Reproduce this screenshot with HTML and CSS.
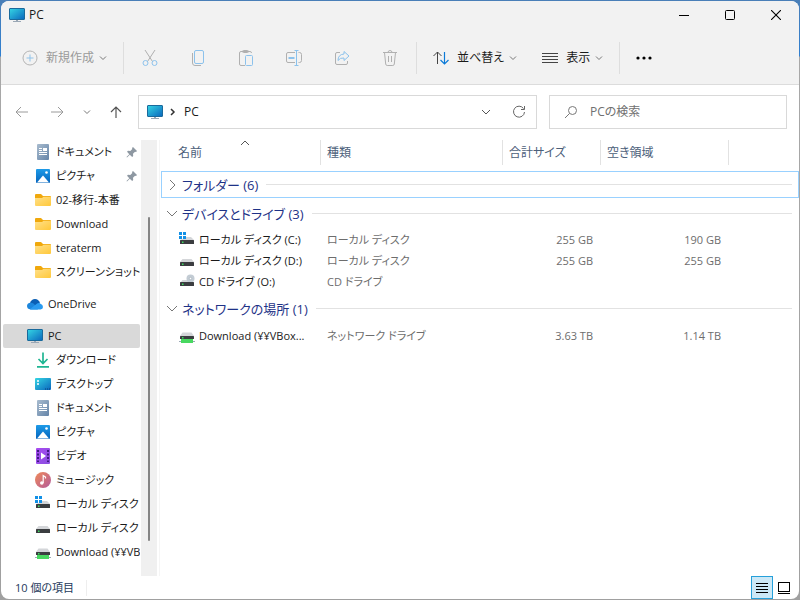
FILE: index.html
```html
<!DOCTYPE html>
<html lang="ja">
<head>
<meta charset="utf-8">
<title>PC</title>
<link rel="stylesheet" href="styles.css">
</head>
<body>

<!-- icon sprite -->
<svg class="sprite" aria-hidden="true">
  <defs>
    <linearGradient id="g-screen" x1="0" y1="0" x2="1" y2="1"><stop offset="0" stop-color="#35d6e4"/><stop offset="1" stop-color="#0a66bd"/></linearGradient>
    <linearGradient id="g-folder" x1="0" y1="0" x2="1" y2="1"><stop offset="0" stop-color="#ffe08a"/><stop offset="1" stop-color="#ffc83a"/></linearGradient>
    <linearGradient id="g-doc" x1="0" y1="0" x2="1" y2="1"><stop offset="0" stop-color="#a9bccf"/><stop offset="1" stop-color="#6484a8"/></linearGradient>
    <linearGradient id="g-pic" x1="0" y1="0" x2="0" y2="1"><stop offset="0" stop-color="#1e9be8"/><stop offset="1" stop-color="#0464bd"/></linearGradient>
    <linearGradient id="g-video" x1="0" y1="0" x2="1" y2="1"><stop offset="0" stop-color="#a84bf0"/><stop offset="1" stop-color="#8a4fe0"/></linearGradient>
    <linearGradient id="g-music" x1="0" y1="0" x2="1" y2="1"><stop offset="0" stop-color="#f08a58"/><stop offset="1" stop-color="#b35a9c"/></linearGradient>
  </defs>
  <symbol id="i-pc" viewBox="0 0 16 16">
    <rect x="0.500" y="1.500" width="15" height="11" rx="0.500" fill="url(#g-screen)" stroke="#1a6a9c"/>
    <path d="M7 13h2v1h3v1H4v-1h3z" fill="#9aa7b5"/>
  </symbol>
  <symbol id="i-folder" viewBox="0 0 16 16">
    <path d="M0 3q0-1 1-1h5l2 2h7q1 0 1 1v3H0z" fill="#f0a80c"/>
    <path d="M0 6h7l1.500-1.200H15q1 0 1 1V13q0 1-1 1H1q-1 0-1-1z" fill="url(#g-folder)"/>
  </symbol>
  <symbol id="i-doc" viewBox="0 0 16 16">
    <rect x="2" y="0" width="12" height="16" rx="1" fill="url(#g-doc)"/>
    <path d="M4 4.500h3M4 6.500h3M4 8.500h8M4 10.500h8" stroke="#fff"/><rect x="8" y="4" width="4" height="3" fill="#fff"/>
  </symbol>
  <symbol id="i-pic" viewBox="0 0 16 16">
    <rect x="1" y="1" width="14" height="14" rx="1" fill="url(#g-pic)"/>
    <path d="M2 14.500L8 7.500l6 7z" fill="#fff"/><circle cx="11.500" cy="4.500" r="1.300" fill="#fff"/>
  </symbol>
  <symbol id="i-video" viewBox="0 0 16 16">
    <rect x="1" y="0" width="14" height="16" rx="1" fill="url(#g-video)"/>
    <path d="M3 2v12M13 2v12" stroke="#3e1a80" stroke-width="2" stroke-dasharray="2 1.500"/>
    <path d="M6 4.500l5 3.500-5 3.500z" fill="#fff"/>
  </symbol>
  <symbol id="i-music" viewBox="0 0 16 16">
    <circle cx="8" cy="8" r="8" fill="url(#g-music)"/>
    <circle cx="6.800" cy="11" r="1.800" fill="#fff"/><path d="M8.200 11V3.500l2.300 1.500v1.500" fill="none" stroke="#fff" stroke-width="1.200"/>
  </symbol>
  <symbol id="i-down" viewBox="0 0 16 16">
    <path d="M8 0.500v11M3.500 7L8 11.500 12.500 7M2 14.800h12" fill="none" stroke="#1fb592" stroke-width="1.700"/>
  </symbol>
  <symbol id="i-desk" viewBox="0 0 16 16">
    <rect x="0" y="2" width="16" height="12" rx="1" fill="url(#g-screen)"/>
    <path d="M2 5h2M2 8h2" stroke="#fff" stroke-width="1.500"/><path d="M10 13h5" stroke="#083e78" stroke-dasharray="1 1"/>
  </symbol>
  <symbol id="i-cloud" viewBox="0 0 16 16">
    <path d="M3 7Q4.500 3 8 3t5 4l-3 3H4z" fill="#0b5fb4"/>
    <path d="M3.500 13.500Q0 13 0 10t3.500-3.300Q6 6.500 8 9l3 4.500z" fill="#1c86dc"/>
    <path d="M3 13L9.500 8q2-1.600 4-0.300 2.500 1 2.500 3.300t-2.500 2.500h-10z" fill="#2a9bf0"/>
  </symbol>
  <symbol id="i-disk" viewBox="0 0 16 16">
    <path d="M3.500 6h9L15 9H1z" fill="#d4d6d9"/><rect x="1" y="9" width="14" height="4" rx="0.500" fill="#3b3d40"/><rect x="3" y="10.500" width="1.500" height="1.500" fill="#3ddc60"/>
  </symbol>
  <symbol id="i-cdisk" viewBox="0 0 16 16">
    <path d="M7 5h5l3 3H1z" fill="#d4d6d9"/><rect x="1" y="8" width="14" height="4" rx="0.500" fill="#3b3d40"/><rect x="3" y="9.500" width="1.500" height="1.500" fill="#3ddc60"/>
    <path d="M0 0h3v3H0zM4 0h3v3H4zM0 4h3v3H0zM4 4h3v3H4z" fill="#1190e6"/>
  </symbol>
  <symbol id="i-cd" viewBox="0 0 16 16">
    <path d="M3.500 6h9L15 9H1z" fill="#d4d6d9"/><circle cx="11.500" cy="4.500" r="4" fill="#c3ccd4"/><circle cx="11.500" cy="4.500" r="1.200" fill="#fff" stroke="#8b98a4" stroke-width="0.500"/>
    <rect x="1" y="8" width="14" height="4" rx="0.500" fill="#3b3d40"/><rect x="3" y="9.500" width="1.500" height="1.500" fill="#3ddc60"/>
  </symbol>
  <symbol id="i-net" viewBox="0 0 16 16">
    <path d="M3.500 4.500h9L15 8H1z" fill="#d4d6d9"/><rect x="1" y="8" width="14" height="3" rx="0.500" fill="#3b3d40"/><rect x="3" y="9" width="1.500" height="1.500" fill="#3ddc60"/>
    <rect x="2" y="11" width="12" height="4" fill="#48d860"/><path d="M0 13.500h2M14 13.500h2" stroke="#9aa7b5"/>
  </symbol>
  <symbol id="i-pin" viewBox="0 0 12 12">
    <path d="M7 1l4 4-1 1-1-0.300-2 2 0.200 2.300-1 1L3.800 8.700 1 11.500 0.500 11l2.800-2.800L1 5.800l1-1 2.300 0.200 2-2L6 2z" fill="#8e98a2"/>
  </symbol>
  <symbol id="i-chev" viewBox="0 0 10 10"><path d="M2 3.500l3 3 3-3" fill="none" stroke="currentColor"/></symbol>
</svg>

<div class="window">

  <header class="titlebar">
    <svg class="icon"><use href="#i-pc"/></svg>
    <h1>PC</h1>
    <div class="controls">
      <button aria-label="最小化"><svg width="10" height="10"><path d="M0 5.500h10" stroke="#000"/></svg></button>
      <button aria-label="最大化"><svg width="10" height="10"><rect x="0.500" y="0.500" width="9" height="9" rx="1" fill="none" stroke="#000"/></svg></button>
      <button aria-label="閉じる"><svg width="10" height="10"><path d="M0 0l10 10M10 0L0 10" stroke="#000" stroke-width="1.100"/></svg></button>
    </div>
  </header>

  <div class="toolbar">
    <button class="new" disabled>
      <svg width="16" height="16" fill="none"><circle cx="8" cy="8" r="7" stroke="#b4b4b4"/><path d="M8 4.500v7M4.500 8h7" stroke="#90c3ea"/></svg>
      <span>新規作成</span>
      <svg class="chev"><use href="#i-chev"/></svg>
    </button>
    <div class="tools">
      <button disabled aria-label="切り取り"><svg width="16" height="18" fill="none"><path d="M3 1l7.500 11.500M13 1L5.500 12.500" stroke="#b0b0b0"/><circle cx="3.500" cy="14" r="2.500" stroke="#8cc2ec"/><circle cx="12.500" cy="14" r="2.500" stroke="#8cc2ec"/></svg></button>
      <button disabled aria-label="コピー"><svg width="16" height="18" fill="none"><path d="M2.500 4v10q0 2.500 2.500 2.500h6" stroke="#b0b0b0"/><rect x="4.500" y="1.500" width="9" height="13" rx="1.500" stroke="#8cc2ec"/></svg></button>
      <button disabled aria-label="貼り付け"><svg width="16" height="18" fill="none"><path d="M7 16.500H3q-1.500 0-1.500-1.500V4q0-1.500 1.500-1.500h9q1.500 0 1.500 1.500" stroke="#b0b0b0"/><rect x="4.500" y="1.500" width="6" height="2" rx="1" stroke="#b0b0b0"/><rect x="7.500" y="6.500" width="7" height="10" rx="1" stroke="#8cc2ec"/></svg></button>
      <button disabled aria-label="名前の変更"><svg width="16" height="18" fill="none"><path d="M9 3.500H2Q0.500 3.500 0.500 5v7q0 1.500 1.500 1.500h7M12.500 3.500h1q2 0 2 2v6q0 2-2 2h-1" stroke="#b0b0b0"/><path d="M10.500 1.500v15M8.500 1.500h4M8.500 16.500h4" stroke="#8cc2ec"/><path d="M2.500 9h6" stroke="#8cc2ec" stroke-width="2"/></svg></button>
      <button disabled aria-label="共有"><svg width="16" height="18" fill="none"><path d="M6 3.500H3Q1.500 3.500 1.500 5v9q0 1.500 1.500 1.500h9q1.500 0 1.500-1.500v-2" stroke="#b0b0b0"/><path d="M10 2.500l5 4.500-5 4.500V9Q6 8.500 4 11.500 4 5.500 10 5z" stroke="#8cc2ec"/></svg></button>
      <button disabled aria-label="削除"><svg width="16" height="18" fill="none" stroke="#b0b0b0"><path d="M1 3.500h14M2.500 3.500l1.200 11.500q0.200 1.500 1.500 1.500h5.600q1.300 0 1.500-1.500L13.500 3.500M6 3.500q0-2 2-2t2 2M6.500 7v6M9.500 7v6"/></svg></button>
    </div>
    <div class="menus">
      <button>
        <svg width="16" height="16" fill="none"><path d="M4.500 14V2M0.500 6l4-4 4 4" stroke="#444"/><path d="M11.500 2v12M7.500 10l4 4 4-4" stroke="#0b7ad8" stroke-width="1.200"/></svg>
        <span>並べ替え</span>
        <svg class="chev"><use href="#i-chev"/></svg>
      </button>
      <button>
        <svg width="16" height="16"><path d="M0 3.500h16M0 6.500h16M0 9.500h16M0 12.500h16" stroke="#444"/></svg>
        <span>表示</span>
        <svg class="chev"><use href="#i-chev"/></svg>
      </button>
    </div>
    <button class="more" aria-label="もっと見る"><svg width="16" height="16"><circle cx="2" cy="8" r="1.600"/><circle cx="8" cy="8" r="1.600"/><circle cx="14" cy="8" r="1.600"/></svg></button>
  </div>

  <div class="navbar">
    <div class="history">
      <button aria-label="戻る"><svg width="14" height="12" fill="none" stroke="#9a9a9a"><path d="M13 6H1M6 1L1 6l5 5"/></svg></button>
      <button aria-label="進む"><svg width="14" height="12" fill="none" stroke="#9a9a9a"><path d="M1 6h12M8 1l5 5-5 5"/></svg></button>
      <button class="recent" aria-label="最近の場所"><svg class="chev"><use href="#i-chev"/></svg></button>
      <button aria-label="上へ"><svg width="12" height="14" fill="none" stroke="#555" stroke-width="1.200"><path d="M6 13V2M1 7l5-5 5 5"/></svg></button>
    </div>
    <div class="address">
      <svg class="icon"><use href="#i-pc"/></svg>
      <svg class="sep" width="6" height="8" fill="none"><path d="M1 1l3 3-3 3" stroke="#333" stroke-width="1.500"/></svg>
      <a href="#">PC</a>
      <button aria-label="以前の場所"><svg width="10" height="10" fill="none"><path d="M1 3l4 4 4-4" stroke="#555"/></svg></button>
      <button aria-label="更新"><svg width="14" height="14" fill="none" stroke="#666"><path d="M11.500 3.500A5.500 5.500 0 1 0 12.500 7M12.500 1v3.500H9"/></svg></button>
    </div>
    <label class="search">
      <svg width="14" height="14" fill="none" stroke="#777"><circle cx="8.500" cy="5.500" r="4"/><path d="M5.500 8.500L1 13"/></svg>
      <input type="search" placeholder="PCの検索" aria-label="PCの検索">
    </label>
  </div>

  <div class="content">
    <nav class="tree">
      <ul class="sub">
        <li><a href="#"><svg class="icon"><use href="#i-doc"/></svg><span>ドキュメント</span><svg class="pin"><use href="#i-pin"/></svg></a></li>
        <li><a href="#"><svg class="icon"><use href="#i-pic"/></svg><span>ピクチャ</span><svg class="pin"><use href="#i-pin"/></svg></a></li>
        <li><a href="#"><svg class="icon"><use href="#i-folder"/></svg><span>02-移行-本番</span></a></li>
        <li><a href="#"><svg class="icon"><use href="#i-folder"/></svg><span>Download</span></a></li>
        <li><a href="#"><svg class="icon"><use href="#i-folder"/></svg><span>teraterm</span></a></li>
        <li><a href="#"><svg class="icon"><use href="#i-folder"/></svg><span>スクリーンショット</span></a></li>
      </ul>
      <ul>
        <li><a href="#"><svg class="icon"><use href="#i-cloud"/></svg><span>OneDrive</span></a></li>
      </ul>
      <ul>
        <li><a class="current" href="#"><svg class="icon"><use href="#i-pc"/></svg><span>PC</span></a>
          <ul class="sub">
            <li><a href="#"><svg class="icon"><use href="#i-down"/></svg><span>ダウンロード</span></a></li>
            <li><a href="#"><svg class="icon"><use href="#i-desk"/></svg><span>デスクトップ</span></a></li>
            <li><a href="#"><svg class="icon"><use href="#i-doc"/></svg><span>ドキュメント</span></a></li>
            <li><a href="#"><svg class="icon"><use href="#i-pic"/></svg><span>ピクチャ</span></a></li>
            <li><a href="#"><svg class="icon"><use href="#i-video"/></svg><span>ビデオ</span></a></li>
            <li><a href="#"><svg class="icon"><use href="#i-music"/></svg><span>ミュージック</span></a></li>
            <li><a href="#"><svg class="icon"><use href="#i-cdisk"/></svg><span>ローカル ディスク (C:)</span></a></li>
            <li><a href="#"><svg class="icon"><use href="#i-disk"/></svg><span>ローカル ディスク (D:)</span></a></li>
            <li><a href="#"><svg class="icon"><use href="#i-net"/></svg><span>Download (¥¥VBox...</span></a></li>
          </ul>
        </li>
      </ul>
    </nav>
    <div class="scrollbar"><div class="thumb"></div></div>

    <main>
      <table>
        <colgroup><col class="c-name"><col class="c-type"><col class="c-size"><col class="c-free"><col></colgroup>
        <thead>
          <tr>
            <th class="sorted">名前<svg width="10" height="6" fill="none"><path d="M1 5l4-4 4 4" stroke="#555"/></svg></th>
            <th>種類</th><th>合計サイズ</th><th>空き領域</th><td></td>
          </tr>
        </thead>
        <tbody>
          <tr class="group"><th colspan="5"><button class="focused"><svg width="12" height="12" fill="none"><path d="M4 1l5 5-5 5" stroke="#777"/></svg><span>フォルダー (6)</span></button></th></tr>
        </tbody>
        <tbody>
          <tr class="group"><th colspan="5"><button><svg width="12" height="12" fill="none"><path d="M1 3l5 5 5-5" stroke="#777"/></svg><span>デバイスとドライブ (3)</span></button></th></tr>
          <tr><td><div class="name"><svg class="icon"><use href="#i-cdisk"/></svg><span>ローカル ディスク (C:)</span></div></td><td>ローカル ディスク</td><td>255 GB</td><td>190 GB</td></tr>
          <tr><td><div class="name"><svg class="icon"><use href="#i-disk"/></svg><span>ローカル ディスク (D:)</span></div></td><td>ローカル ディスク</td><td>255 GB</td><td>255 GB</td></tr>
          <tr><td><div class="name"><svg class="icon"><use href="#i-cd"/></svg><span>CD ドライブ (O:)</span></div></td><td>CD ドライブ</td><td></td><td></td></tr>
        </tbody>
        <tbody>
          <tr class="group"><th colspan="5"><button><svg width="12" height="12" fill="none"><path d="M1 3l5 5 5-5" stroke="#777"/></svg><span>ネットワークの場所 (1)</span></button></th></tr>
          <tr><td><div class="name"><svg class="icon"><use href="#i-net"/></svg><span>Download (¥¥VBox...</span></div></td><td>ネットワーク ドライブ</td><td>3.63 TB</td><td>1.14 TB</td></tr>
        </tbody>
      </table>
    </main>
  </div>

  <footer class="status">
    <span>10 個の項目</span>
    <div class="views">
      <button class="on" aria-label="詳細"><svg width="12" height="12"><path d="M0 1.500h12M0 4.500h12M0 7.500h12M0 10.500h12" stroke="#000"/></svg></button>
      <button aria-label="大アイコン"><svg width="12" height="12" fill="none" stroke="#000"><rect x="0.500" y="0.500" width="11" height="9"/><path d="M0 11.500h12"/></svg></button>
    </div>
  </footer>

</div>
</body>
</html>
```
FILE: styles.css
```css
* { box-sizing: border-box; }

body {
  margin: 0;
  height: 100vh;
  padding: 1px;
  background: linear-gradient(#4a7fb8 0, #2f7fd0 56px, #a8a8a8 57px, #a0a0a0 100%);
  font: 12px/16px "Open Sans", "Noto Sans CJK JP", sans-serif;
  font-feature-settings: "palt";
  color: #1a1a1a;
}

button, input { font: inherit; font-feature-settings: inherit; color: inherit; }
button { padding: 0; border: 0; background: none; display: flex; align-items: center; }
a { color: inherit; text-decoration: none; }
ul { margin: 0; padding: 0; list-style: none; }
svg { flex: none; display: block; }

.sprite { position: absolute; width: 0; height: 0; }
.icon { width: 16px; height: 16px; }
.chev { width: 10px; height: 10px; color: #777; }

.window {
  height: 100%;
  display: flex;
  flex-direction: column;
  border-radius: 8px;
  background: #fff;
  overflow: hidden;
}

/* title bar */
.titlebar {
  display: flex;
  align-items: center;
  height: 30px;
  padding: 0 0 2px 8px;
  gap: 4px;
  background: #f2f2f2;
}
.titlebar h1 { margin: 0; font-size: 12px; font-weight: normal; }
.controls { display: flex; margin-left: auto; }
.controls button { width: 46px; height: 28px; justify-content: center; }

/* command bar */
.toolbar {
  display: flex;
  align-items: center;
  height: 54px;
  padding-left: 21px;
  background: #f2f2f2;
  border-bottom: 1px solid #dcdcdc;
}
.new { gap: 8px; margin-right: 15px; color: #9a9a9a; }
.new .chev, .menus .chev { margin-left: -4px; }
.tools, .menus {
  display: flex;
  align-items: center;
  height: 32px;
  border: solid #dedede;
  border-width: 0 0 0 1px;
}
.tools { gap: 32px; padding: 0 18px; }
.menus { gap: 24px; padding: 0 15px 0 16px; border-right-width: 1px; }
.menus button { gap: 8px; }
.more { margin-left: 16px; }

/* address row */
.navbar {
  display: flex;
  align-items: center;
  height: 55px;
  padding: 0 12px 1px 0;
}
.history { display: flex; align-items: center; gap: 21px; width: 137px; padding-left: 14px; }
.recent { margin: 0 -3px; }
.address, .search {
  display: flex;
  align-items: center;
  height: 34px;
  border: 1px solid #d9d9d9;
}
.address { flex: 1; padding: 0 10px 0 8px; margin-right: 12px; }
.address .sep { margin: 0 8px 0 7px; }
.address a { flex: 1; }
.address button { margin-left: 21px; }
.search { width: 238px; padding: 0 14px; gap: 12px; }
.search input { flex: 1; min-width: 0; padding: 0; border: 0; outline: 0; background: none; }
.search input::placeholder { color: #707070; opacity: 1; }

/* navigation pane */
.content { flex: 1; min-height: 0; display: flex; }
.tree { width: 140px; padding-left: 2px; overflow: hidden; font-size: 11px; }
.tree > ul + ul { margin-top: 8px; }
.tree a {
  display: flex;
  align-items: center;
  gap: 5px;
  height: 24px;
  margin-right: 1px;
  padding-left: 24px;
  border-radius: 2px;
  white-space: nowrap;
  overflow: hidden;
}
.tree .sub a { padding-left: 32px; }
.tree .current { background: #d9d9d9; }
.tree .pin { width: 12px; height: 12px; margin: 0 2px 0 auto; }

.scrollbar { width: 16px; padding: 77px 7px 0; background: #f0f0f0; }
.thumb { height: 324px; border-radius: 1px; background: #858585; }

/* item list */
main { flex: 1; min-width: 0; margin-left: 2px; border-left: 1px solid #f5f5f5; }
table { width: 100%; table-layout: fixed; border-spacing: 0; }
th { font-weight: normal; text-align: left; }
.c-name { width: 161px; }
.c-type { width: 182px; }
.c-size { width: 98px; }
.c-free { width: 128px; }
thead th { height: 25px; padding: 0 6px; border-right: 1px solid #e2e2e2; color: #4c607a; }
thead .sorted { padding-left: 18px; position: relative; }
.sorted svg { position: absolute; top: 0; left: 50%; }
tbody td { height: 21px; padding: 0 8px 0 6px; font-size: 11px; color: #6d6d6d; white-space: nowrap; }
tbody td:nth-child(n+3) { text-align: right; }
tbody td:first-child { padding: 0 0 0 19px; color: #1a1a1a; }
.name { display: flex; align-items: center; gap: 4px; }

.group th { height: 31px; padding: 0 0 0 1px; }
tbody:nth-of-type(1) .group th { height: 33px; padding-top: 6px; }
tbody:last-child .group th { height: 33px; }
.group button {
  width: 100%;
  height: 27px;
  padding: 0 6px 0 4px;
  gap: 4px;
  border: 1px solid transparent;
  font-size: 13px;
  color: #1e3287;
}
.group button::after { content: ""; flex: 1; height: 1px; margin-left: 4px; background: #e2e2e2; }
.group .focused { border-color: #99d1ff; }

/* status bar */
.status {
  display: flex;
  align-items: center;
  height: 23px;
  padding: 0 4px 0 14px;
  font-size: 11px;
  color: #1e395b;
}
.status span { padding-right: 12px; border-right: 1px solid #eee; }
.views { display: flex; margin-left: auto; }
.views button { width: 22px; height: 23px; justify-content: center; }
.views .on { background: #cce8f6; border: 1px solid #26a0da; }
```
